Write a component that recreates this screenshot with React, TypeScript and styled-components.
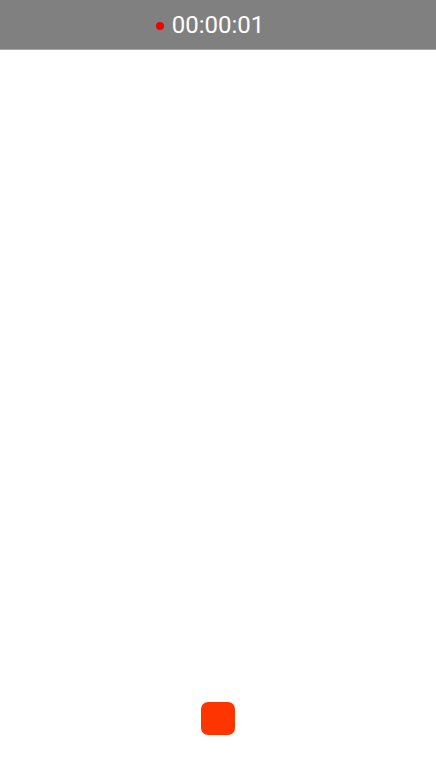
import React from "react";
import styled, {createGlobalStyle} from "styled-components";

const GlobalStyle = createGlobalStyle`
  html, body {
    margin: 0;
    padding: 0;
    background: #fff;
  }
  #root {
    height: 100vh;
  }
`;

const Screen = styled.div`
  display: flex;
  flex-direction: column;
  height: 100vh;
  font-family: Roboto, "Noto Sans", sans-serif;
`;

const TopBar = styled.header`
  height: 49px;
  background: #808080;
  border-bottom: 1px solid #a6a6a6;
  display: flex;
  align-items: center;
  justify-content: center;
  gap: 8px;
`;

const RecDot = styled.span`
  width: 8px;
  height: 8px;
  border-radius: 50%;
  background: #f20000;
  margin-top: 2px;
`;

const Timer = styled.span`
  color: #fff;
  font-size: 24px;
  line-height: 1;
  margin-right: 16px;
`;

const Preview = styled.main`
  flex: 1;
`;

const Controls = styled.footer`
  display: flex;
  justify-content: center;
  padding-bottom: 40px;
`;

const StopButton = styled.button`
  width: 34px;
  height: 33px;
  border: none;
  border-radius: 7px;
  background: #ff3500;
  padding: 0;
  cursor: pointer;
`;

export default function App() {
  return (
    <>
      <GlobalStyle/>
      <Screen>
        <TopBar>
          <RecDot/>
          <Timer>00:00:01</Timer>
        </TopBar>
        <Preview/>
        <Controls>
          <StopButton aria-label="Stop recording"/>
        </Controls>
      </Screen>
    </>
  );
}
